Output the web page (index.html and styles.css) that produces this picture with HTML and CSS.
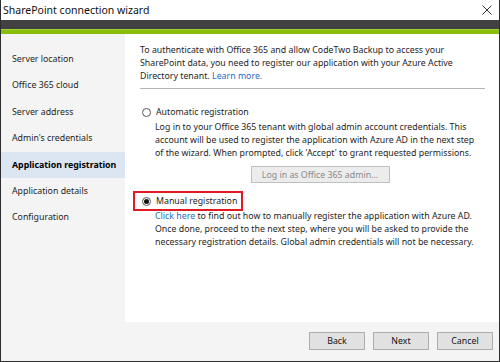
FILE: index.html
```html
<!DOCTYPE html>
<html lang="en">
<head>
    <meta charset="UTF-8">
    <title>SharePoint connection wizard</title>
    <link rel="stylesheet" href="styles.css">
</head>
<body>
    <div class="window">
        <div class="titlebar">
            <span class="title">SharePoint connection wizard</span>
            <svg class="close" width="10" height="10" viewBox="0 0 10 10">
                <path d="M0.5 0.5 L9.5 9.5 M9.5 0.5 L0.5 9.5" stroke="#333" stroke-width="1" fill="none"/>
            </svg>
        </div>
        <div class="brand-bar"></div>
        <div class="accent-bar"></div>

        <div class="wizard">
            <ul class="steps">
                <li class="step">Server location</li>
                <li class="step">Office 365 cloud</li>
                <li class="step">Server address</li>
                <li class="step">Admin's credentials</li>
                <li class="step active">Application registration</li>
                <li class="step">Application details</li>
                <li class="step">Configuration</li>
            </ul>

            <div class="content">
                <p class="intro">
                    To authenticate with Office 365 and allow CodeTwo Backup to access your<br>
                    SharePoint data, you need to register our application with your Azure Active<br>
                    Directory tenant. <a href="#" class="link">Learn more.</a>
                </p>
                <hr class="divider">

                <label class="option">
                    <span class="radio"></span>
                    <span>Automatic registration</span>
                </label>
                <p class="option-text">
                    Log in to your Office 365 tenant with global admin account credentials. This<br>
                    account will be used to register the application with Azure AD in the next step<br>
                    of the wizard. When prompted, click 'Accept' to grant requested permissions.
                </p>
                <div class="login-row">
                    <button class="btn btn-disabled" disabled>Log in as Office 365 admin...</button>
                </div>

                <label class="option option-marked">
                    <span class="radio checked"></span>
                    <span>Manual registration</span>
                </label>
                <p class="option-text">
                    <a href="#" class="link">Click here</a> to find out how to manually register the application with Azure AD.<br>
                    Once done, proceed to the next step, where you will be asked to provide the<br>
                    necessary registration details. Global admin credentials will not be necessary.
                </p>
            </div>
        </div>

        <div class="footer">
            <button class="btn">Back</button>
            <button class="btn">Next</button>
            <button class="btn">Cancel</button>
        </div>
    </div>
</body>
</html>
```

FILE: styles.css
```css
* {
    margin: 0;
    padding: 0;
    box-sizing: border-box;
}

body {
    font-family: 'Noto Sans', 'Open Sans', sans-serif;
    font-size: 8.8px;
    color: #1e1e1e;
    background: #fff;
}

.window {
    width: 500px;
    height: 362px;
    display: flex;
    flex-direction: column;
    border-left: 1px solid #2e2e2e;
    border-right: 1px solid #2e2e2e;
    border-bottom: 1px solid #2e2e2e;
    background: #f4f4f4;
}

.titlebar {
    height: 20px;
    background: #fff;
    display: flex;
    align-items: center;
    justify-content: space-between;
    padding: 0 7px 0 2px;
}

.title {
    font-size: 10.5px;
    color: #111;
}

.brand-bar {
    height: 9px;
    background: #414141;
}

.accent-bar {
    height: 5px;
    background: #88bd0c;
    border-top: 1px solid #a4d12a;
}

.wizard {
    display: flex;
    height: 288px;
}

.steps {
    list-style: none;
    width: 124px;
    flex-shrink: 0;
    padding-top: 12px;
}

.step {
    height: 26.4px;
    line-height: 26px;
    padding-left: 11px;
    white-space: nowrap;
}

.step.active {
    background: #dce6f2;
    font-weight: bold;
    color: #000;
}

.content {
    flex: 1;
    background: #fff;
    padding: 10px 14px 0 15px;
    line-height: 13px;
    white-space: nowrap;
}

.link {
    color: #1a6fc4;
    text-decoration: none;
}

.divider {
    border: none;
    border-top: 1px solid #b4b4b4;
    margin: 5px 0 16px;
}

.option {
    display: flex;
    align-items: center;
    gap: 5px;
    padding-left: 2px;
    height: 14px;
}

.option-marked {
    width: 110px;
    height: 20px;
    margin: 0 0 0 -7px;
    padding-left: 7px;
    border: 2px solid #e01b24;
}

.radio {
    width: 9px;
    height: 9px;
    border: 1px solid #555;
    border-radius: 50%;
    display: flex;
    align-items: center;
    justify-content: center;
}

.radio.checked::after {
    content: "";
    width: 5px;
    height: 5px;
    border-radius: 50%;
    background: #111;
}

.option-text {
    padding-left: 15px;
    margin-top: 2px;
}

.option-marked + .option-text {
    margin-top: -1px;
}

.login-row {
    display: flex;
    justify-content: center;
    padding-left: 15px;
    margin: 6px 0 8px;
}

.btn {
    font-family: inherit;
    font-size: 8.8px;
    height: 18px;
    padding: 0 8px;
    background: #e1e1e1;
    border: 1px solid #adadad;
    color: #111;
}

.btn-disabled {
    width: 139px;
    height: 17px;
    background: #ececec;
    border-color: #bfbfbf;
    color: #8a8a8a;
}

.footer {
    flex: 1;
    display: flex;
    justify-content: flex-end;
    align-items: center;
    gap: 8px;
    padding-right: 6px;
    padding-bottom: 1px;
}

.footer .btn {
    width: 56px;
}
```
